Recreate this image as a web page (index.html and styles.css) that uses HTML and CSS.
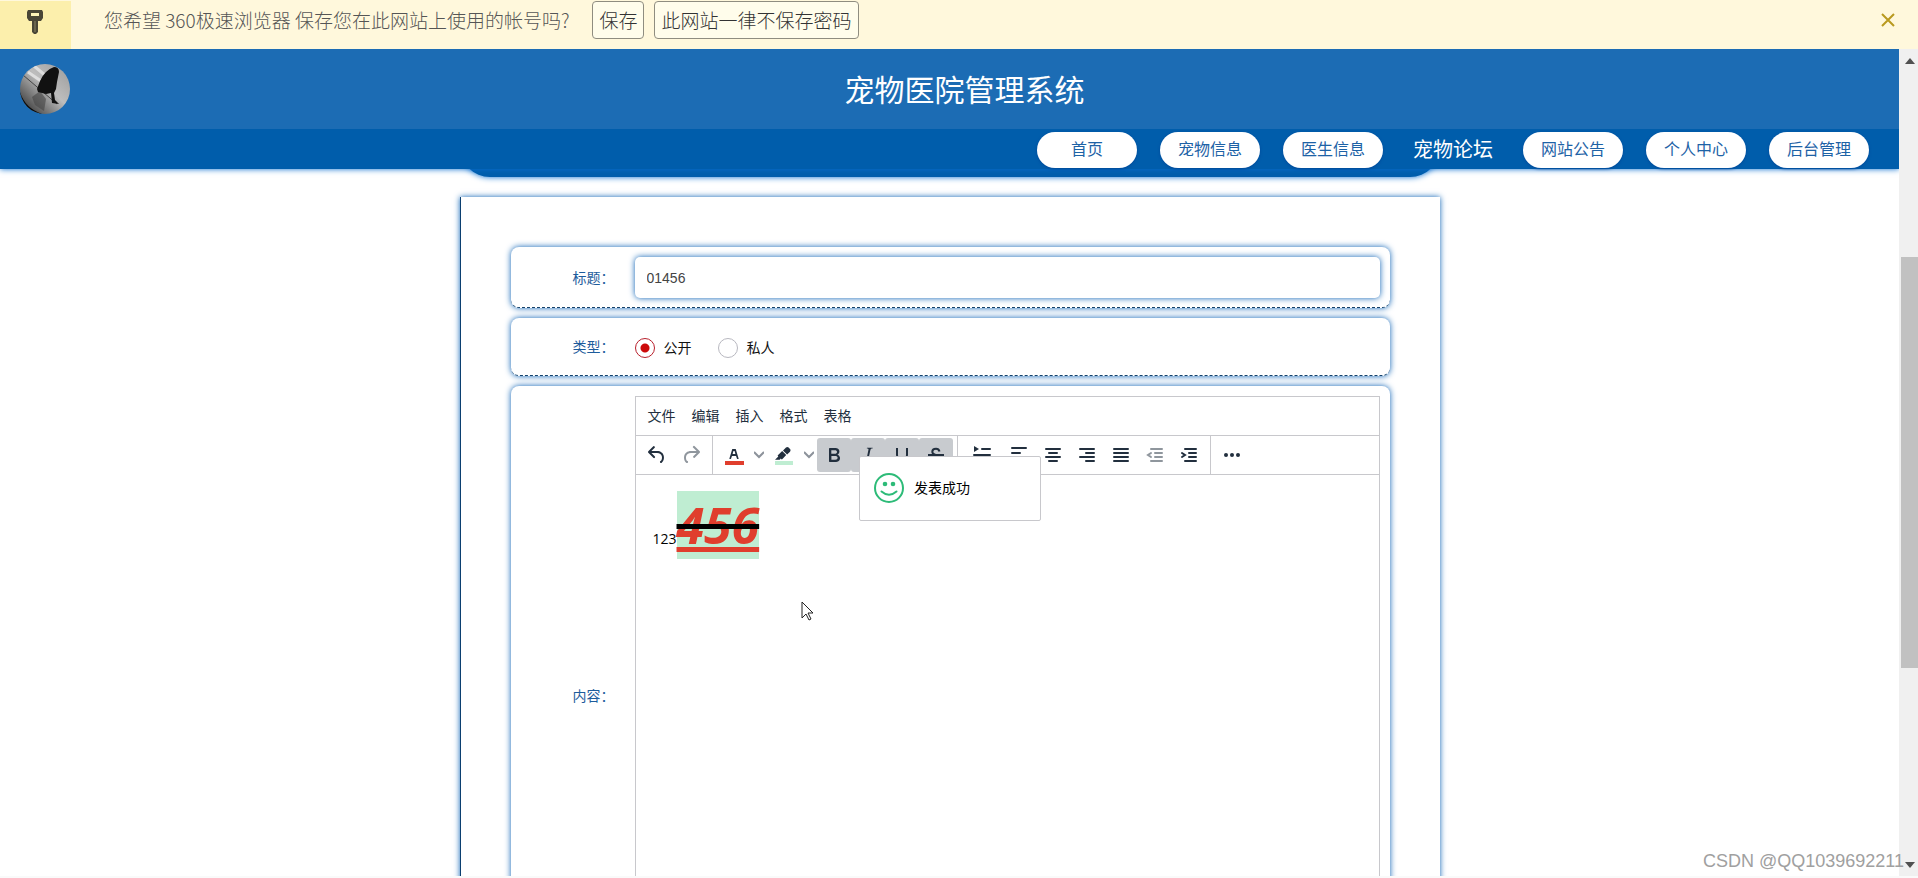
FILE: index.html
```html
<!DOCTYPE html>
<html lang="zh-CN">
<head>
<meta charset="utf-8">
<title>宠物医院管理系统</title>
<link rel="stylesheet" href="styles.css">
</head>
<body>
<div class="infobar">
  <div class="infobar-icon">
    <svg width="18" height="26" viewBox="0 0 18 26" aria-hidden="true">
      <path d="M2 1h14l1 2v6l-2 3h-3v11l-2 2H8l-2-2V12H3L1 9V3z" fill="#4a4636"/>
      <path d="M5 4h8v3H5z" fill="#fdf3b8"/>
      <path d="M9 12v11" stroke="#8a8467" stroke-width="1"/>
    </svg>
  </div>
  <p class="infobar-text">您希望 360极速浏览器 保存您在此网站上使用的帐号吗?</p>
  <button class="infobar-btn" type="button">保存</button>
  <button class="infobar-btn" type="button">此网站一律不保存密码</button>
  <button class="infobar-close" type="button" aria-label="关闭">
    <svg width="14" height="14" viewBox="0 0 14 14"><path d="M1 1l12 12M13 1L1 13" stroke="#b99a1f" stroke-width="2"/></svg>
  </button>
</div>

<div class="viewport">
  <div class="page">
    <header class="site-header">
      <div class="brand">
        <svg class="avatar" viewBox="0 0 50 50" role="img" aria-label="头像">
          <defs>
            <clipPath id="round"><circle cx="25" cy="25" r="25"/></clipPath>
            <linearGradient id="wall" x1="0" y1="1" x2="1" y2="0">
              <stop offset="0" stop-color="#222"/><stop offset=".3" stop-color="#777"/>
              <stop offset=".55" stop-color="#bdbdbd"/><stop offset="1" stop-color="#999"/>
            </linearGradient>
          </defs>
          <g clip-path="url(#round)">
            <path d="M0 0h50v50H0z" fill="url(#wall)"/>
            <path d="M8 8l13 9M14 2l12 10" stroke="#dedede" stroke-width="3"/>
            <path d="M3 11l34 29" stroke="#444" stroke-width="1"/>
            <path d="M0 28q5 16 22 22H0z" fill="#0c0c0c"/>
            <path d="M12 33l8-6 6 8-2 12-9-6z" fill="#444" opacity=".6"/>
            <path d="M34 3q5 0 5 5l-2 10-1 7-2 4 1 7 4 4-7-1-1-10-5 1-8-2-1-3 3-8q5-11 14-14z" fill="#111"/>
          </g>
        </svg>
        <h1 class="title">宠物医院管理系统</h1>
      </div>
      <nav class="nav">
        <a class="nav-item" href="#">首页</a>
        <a class="nav-item" href="#">宠物信息</a>
        <a class="nav-item" href="#">医生信息</a>
        <a class="nav-item nav-item-active" href="#">宠物论坛</a>
        <a class="nav-item" href="#">网站公告</a>
        <a class="nav-item" href="#">个人中心</a>
        <a class="nav-item" href="#">后台管理</a>
      </nav>
    </header>
    <div class="banner-edge"></div>
    <main class="panel">
      <form class="form">
        <div class="row">
          <label class="label" for="subject">标题：</label>
          <input class="text-input" id="subject" type="text" value="01456">
        </div>
        <div class="row row-radio">
          <span class="label" id="kind">类型：</span>
          <div class="radios" role="radiogroup" aria-labelledby="kind">
            <label class="radio"><input type="radio" name="kind" checked>公开</label>
            <label class="radio"><input type="radio" name="kind">私人</label>
          </div>
        </div>
        <div class="row row-editor">
          <span class="label">内容：</span>
          <div class="editor">
            <div class="menubar">
              <button type="button">文件</button>
              <button type="button">编辑</button>
              <button type="button">插入</button>
              <button type="button">格式</button>
              <button type="button">表格</button>
            </div>
            <div class="toolbar">
              <div class="group">
                <button class="tool" type="button" aria-label="撤销"><svg viewBox="0 0 24 24"><path d="M6.4 8H12c3.7 0 6.2 2 6.8 5.1.6 2.7-.4 5.6-2.3 6.8a1 1 0 01-1-1.8c1.1-.6 1.8-2.7 1.4-4.6-.5-2.1-2.1-3.5-4.9-3.5H6.4l3.3 3.3a1 1 0 11-1.4 1.4l-5-5a1 1 0 010-1.4l5-5a1 1 0 011.4 1.4L6.4 8z"/></svg></button>
                <button class="tool tool-off" type="button" aria-label="重做"><svg viewBox="0 0 24 24"><path d="M17.6 10H12c-2.8 0-4.4 1.4-4.9 3.5-.4 2 .3 4 1.4 4.6a1 1 0 11-1 1.8c-2-1.2-2.9-4.1-2.3-6.8.6-3 3-5.1 6.8-5.1h5.6l-3.3-3.3a1 1 0 111.4-1.4l5 5a1 1 0 010 1.4l-5 5a1 1 0 01-1.4-1.4l3.3-3.3z"/></svg></button>
              </div>
              <div class="group">
                <button class="tool" type="button" aria-label="文字颜色"><svg viewBox="0 0 24 24"><path fill="#e03e2d" d="M3 18h19v4H3z"/><path d="M8.7 16h-.8a.5.5 0 01-.5-.6l2.7-9c.1-.3.3-.4.5-.4h2.8c.2 0 .4.1.5.4l2.7 9a.5.5 0 01-.5.6h-.8a.5.5 0 01-.4-.4l-.7-2.2c0-.3-.3-.4-.5-.4h-3.4c-.2 0-.4.1-.5.4l-.7 2.2c0 .3-.2.4-.4.4zm2.6-7.6l-.6 2a.5.5 0 00.5.6h1.6a.5.5 0 00.5-.6l-.6-2c0-.3-.3-.4-.5-.4h-.4c-.2 0-.4.1-.5.4z"/></svg></button>
                <button class="tool-arrow" type="button" aria-label="更多文字颜色"><svg viewBox="0 0 10 10"><path d="M0 2l5 5 5-5"/></svg></button>
                <button class="tool" type="button" aria-label="背景颜色"><svg viewBox="0 0 24 24"><path fill="#bfedd2" d="M3 18h18v4H3z"/><path d="M7.7 16.7H3l3.3-3.3-.7-.8L10.2 8l4 4.1-4 4.2c-.2.2-.6.2-.8 0l-.6-.7-1.1 1.1zm5-7.5L11 7.4l3-2.9a2 2 0 012.6 0L18 6c.7.7.7 2 0 2.7l-2.9 2.9-1.8-1.8-.5-.6"/></svg></button>
                <button class="tool-arrow" type="button" aria-label="更多背景颜色"><svg viewBox="0 0 10 10"><path d="M0 2l5 5 5-5"/></svg></button>
                <button class="tool tool-on" type="button" aria-label="粗体"><svg viewBox="0 0 24 24"><path d="M7.8 19c-.3 0-.5 0-.6-.2l-.2-.5V5.7c0-.2 0-.4.2-.5l.6-.2h5c1.5 0 2.7.3 3.5 1 .7.6 1.1 1.4 1.1 2.5a3 3 0 01-.6 1.9c-.4.6-1 1-1.6 1.2.4.1.9.3 1.3.6s.8.7 1 1.2c.4.4.5 1 .5 1.6 0 1.3-.4 2.3-1.3 3-.8.7-2.1 1-3.8 1H7.8zm5-8.3c.6 0 1.2-.1 1.6-.5.4-.3.6-.7.6-1.3 0-1.1-.8-1.7-2.3-1.7H9.3v3.5h3.4zm.5 6c.7 0 1.3-.1 1.7-.4.4-.4.6-.9.6-1.5s-.2-1-.7-1.4c-.4-.3-1-.4-2-.4H9.4v3.8h4z"/></svg></button>
                <button class="tool tool-on" type="button" aria-label="斜体"><svg viewBox="0 0 24 24"><path d="M16.7 4.7l-.1.9h-.3c-.6 0-1 0-1.4.3-.3.3-.4.6-.5 1.1l-2.1 9.8v.6c0 .5.4.8 1.4.8h.2l-.2.8H8l.2-.8h.2c1.1 0 1.8-.5 2-1.5l2-9.8.1-.5c0-.6-.4-.8-1.4-.8h-.3l.2-.9h5.8z"/></svg></button>
                <button class="tool tool-on" type="button" aria-label="下划线"><svg viewBox="0 0 24 24"><path d="M7 5v7a5 5 0 0010 0V5M6 19h12" fill="none" stroke="#222f3e" stroke-width="2"/></svg></button>
                <button class="tool tool-on" type="button" aria-label="删除线"><svg viewBox="0 0 24 24"><path d="M15.500 8.500C15 6.500 13.500 5.800 12 5.800c-2 0-3.700 1-3.700 3 0 1.500 1 2.400 3 3M15 14.500c1 2.500-.5 4-3 4s-4-1-4-3M4 12h16" fill="none" stroke="#222f3e" stroke-width="2"/></svg></button>
              </div>
              <div class="group">
                <button class="tool tool-wide" type="button" aria-label="首行缩进"><svg viewBox="0 0 24 24"><path d="M4 3l5 3-5 3z"/><path class="bars" d="M12 6h8M4 12h16M4 18h16"/></svg></button>
                <button class="tool" type="button" aria-label="左对齐"><svg viewBox="0 0 24 24"><path class="bars" d="M5 5h14M5 10h8M5 14h14M5 18h8"/></svg></button>
                <button class="tool" type="button" aria-label="居中"><svg viewBox="0 0 24 24"><path class="bars" d="M5 6h14M8 10h8M5 14h14M8 18h8"/></svg></button>
                <button class="tool" type="button" aria-label="右对齐"><svg viewBox="0 0 24 24"><path class="bars" d="M5 6h14M11 10h8M5 14h14M11 18h8"/></svg></button>
                <button class="tool" type="button" aria-label="两端对齐"><svg viewBox="0 0 24 24"><path class="bars" d="M5 6h14M5 10h14M5 14h14M5 18h14"/></svg></button>
                <button class="tool tool-off" type="button" aria-label="减少缩进"><svg viewBox="0 0 24 24"><path class="bars" d="M8 6h11M12 10h7M12 14h7M8 18h11M8 10l-3 2 3 2"/></svg></button>
                <button class="tool" type="button" aria-label="增加缩进"><svg viewBox="0 0 24 24"><path class="bars" d="M8 6h11M12 10h7M12 14h7M8 18h11M5 10l3 2-3 2"/></svg></button>
              </div>
              <div class="group">
                <button class="tool" type="button" aria-label="更多"><svg viewBox="0 0 24 24"><circle cx="6" cy="12" r="2"/><circle cx="12" cy="12" r="2"/><circle cx="18" cy="12" r="2"/></svg></button>
              </div>
            </div>
            <div class="editor-body" contenteditable="true" aria-label="内容"><p>123<span class="struck"><em>456</em></span></p></div>
          </div>
        </div>
      </form>
    </main>
  </div>
  <div class="scrollbar" aria-hidden="true">
    <svg width="10" height="6" viewBox="0 0 10 6"><path d="M0 6l5-6 5 6z" fill="#505050"/></svg>
    <div class="track"><div class="thumb"></div></div>
    <svg width="10" height="6" viewBox="0 0 10 6"><path d="M0 0l5 6 5-6z" fill="#505050"/></svg>
  </div>
</div>

<div class="toast" role="status">
  <svg width="30" height="30" viewBox="0 0 30 30" aria-hidden="true">
    <circle cx="15" cy="15" r="14" fill="none" stroke="#2dbb78" stroke-width="2"/>
    <circle cx="11" cy="11" r="2.300" fill="#2dbb78"/><circle cx="19" cy="11" r="2.300" fill="#2dbb78"/>
    <path d="M7.500 18.500q7.500 6.500 15 0" fill="none" stroke="#2dbb78" stroke-width="2" stroke-linecap="round"/>
  </svg>
  <span>发表成功</span>
</div>
<svg class="cursor" width="13" height="20" viewBox="0 0 13 20" aria-hidden="true"><path d="M1 1v16l4-4 3 6 2-1-3-6h5z" fill="#fff" stroke="#222" stroke-width="1"/></svg>
<div class="watermark">CSDN @QQ1039692211</div>
</body>
</html>
```
FILE: styles.css
```css
* {
  box-sizing: border-box;
}

body {
  margin: 0;
  height: 100vh;
  padding-bottom: 2px;
  display: flex;
  flex-direction: column;
  overflow: hidden;
  background: #fafafa;
  color: #111;
  font: 14px/20px "Liberation Sans", "Noto Sans CJK SC", sans-serif;
}

button {
  padding: 0;
  border: 0;
  background: none;
  font: inherit;
  color: inherit;
}

/* browser prompt */
.infobar {
  flex: none;
  height: 49px;
  padding: 0 23px 9px 0;
  display: flex;
  align-items: center;
  background: #fff8dc;
  font-family: "Noto Sans CJK SC", sans-serif;
  font-size: 19px;
  font-weight: 300;
}

.infobar-icon {
  width: 71px;
  height: 48px;
  margin-bottom: -9px;
  padding: 8px 0 0 26px;
  background: #fcefac;
}

.infobar-text {
  margin: 0 23px 0 33px;
  color: #555;
}

.infobar-btn {
  height: 38px;
  margin-right: 10px;
  padding: 0 6px;
  border: 1px solid #8f8d80;
  border-radius: 4px;
  background: #fffdeb;
  color: #333;
}

.infobar-close {
  margin-left: auto;
  display: flex;
}

/* page */
.viewport {
  flex: 1;
  min-height: 0;
  display: flex;
}

.page {
  flex: 1;
  overflow: hidden;
  background: #fff;
}

.site-header {
  position: relative;
  z-index: 2;
  background: #005dab;
  box-shadow: 0 0 6px #0a6fd0;
}

.brand {
  height: 80px;
  padding: 0 20px;
  display: flex;
  align-items: center;
  background: #1c6cb4;
}

.avatar {
  width: 50px;
  height: 50px;
}

.title {
  flex: 1;
  margin: 0 20px 0 0;
  padding-top: 4px;
  text-align: center;
  font-size: 30px;
  line-height: 40px;
  font-weight: 400;
  color: #fff;
}

.nav {
  height: 40px;
  padding: 3px 30px 0;
  display: flex;
  justify-content: flex-end;
  gap: 23px;
}

.nav-item {
  width: 100px;
  height: 36px;
  border-radius: 18px;
  background: #fff;
  box-shadow: 0 1px 3px #00499a;
  color: #1d62a6;
  font-size: 16px;
  line-height: 36px;
  text-align: center;
  text-decoration: none;
}

.nav-item-active {
  width: auto;
  padding: 0 7px;
  background: none;
  box-shadow: none;
  color: #fff;
  font-size: 20px;
}

.banner-edge {
  max-width: 980px;
  height: 38px;
  margin: -30px auto 0;
  border-radius: 0 0 30px 30px;
  background: #005dab;
  box-shadow: 0 0 6px #0a6fd0;
}

.panel {
  max-width: 980px;
  margin: 20px auto 0;
  padding: 50px;
  border-left: 1px solid #0b3f70;
  box-shadow: 0 0 6px #0a60b4;
}

.form {
  display: flex;
  flex-direction: column;
  gap: 10px;
}

.row {
  display: flex;
  align-items: center;
  padding: 10px 10px 9px;
  border-bottom: 1px dashed #12406a;
  border-radius: 8px;
  box-shadow: 0 0 6px #0a60b4;
}

.label {
  width: 94px;
  margin-right: 20px;
  text-align: right;
  color: #1d5c9c;
}

.text-input {
  flex: 1;
  height: 41px;
  padding: 0 12px;
  border: 0;
  border-radius: 5px;
  box-shadow: 0 0 6px #0a60b4;
  font: inherit;
  color: #444;
}

.row-radio {
  min-height: 58px;
}

.radios {
  display: flex;
  gap: 26px;
  padding-top: 2px;
}

.radio {
  display: flex;
  align-items: center;
  gap: 9px;
}

.radio input {
  appearance: none;
  width: 20px;
  height: 20px;
  margin: 0;
  border: 1px solid #b8b8c0;
  border-radius: 50%;
  background: #fff;
}

.radio input:checked {
  border-color: #b8202c;
  background: radial-gradient(circle, #cc0a0a 4px, #fff 5px);
}

/* editor */
.editor {
  flex: 1;
  height: 600px;
  border: 1px solid #c8c8cc;
  color: #222f3e;
}

.menubar {
  height: 39px;
  padding: 0 12px;
  display: flex;
  gap: 16px;
  border-bottom: 1px solid #c8c8cc;
}

.toolbar {
  height: 39px;
  display: flex;
  border-bottom: 1px solid #c8c8cc;
}

.group {
  padding: 2px 4px;
  display: flex;
  border-right: 1px solid #c8c8cc;
}

.group:last-child {
  border-right: 0;
}

.tool {
  width: 34px;
  height: 34px;
  display: flex;
  align-items: center;
  justify-content: center;
  border-radius: 3px;
}

.tool svg {
  width: 24px;
  height: 24px;
  fill: #222f3e;
}

.tool .bars {
  fill: none;
  stroke: #222f3e;
  stroke-width: 2;
  stroke-linecap: round;
}

.tool-wide {
  width: 40px;
}

.tool-on {
  background: #c8cbcf;
}

.tool-off {
  opacity: .5;
}

.tool-arrow {
  width: 16px;
  height: 34px;
  display: flex;
  align-items: center;
  justify-content: center;
}

.tool-arrow svg {
  width: 10px;
  height: 10px;
  fill: none;
  stroke: #8d939b;
  stroke-width: 2;
}

.editor-body {
  padding: 16px 17px;
  color: #000;
  font-family: "Open Sans", sans-serif;
  line-height: 20px;
  outline: 0;
}

.editor-body p {
  margin: 0;
  line-height: normal;
}

.struck {
  font-size: 50px;
  font-weight: 700;
  text-decoration: line-through;
}

.struck em {
  background: #bfedd2;
  color: #e03e2d;
  text-decoration: underline;
  text-decoration-skip-ink: none;
}

/* scrollbar */
.scrollbar {
  width: 19px;
  padding: 9px 0 8px 2px;
  display: flex;
  flex-direction: column;
  align-items: center;
  background: #f0f0f0;
}

.track {
  flex: 1;
  align-self: stretch;
  padding-top: 193px;
}

.thumb {
  height: 68%;
  background: #c1c1c1;
}

/* overlays */
.toast {
  position: absolute;
  top: 456px;
  left: calc(50% - 100px);
  width: 182px;
  height: 65px;
  padding: 0 14px 2px;
  display: flex;
  align-items: center;
  gap: 10px;
  border: 1px solid #c8c8cc;
  border-radius: 2px;
  background: #fff;
  color: #000;
}

.cursor {
  position: absolute;
  left: 801px;
  top: 601px;
}

.watermark {
  position: absolute;
  right: 14px;
  bottom: 7px;
  color: #a0a0a0;
  font-family: "Liberation Sans", sans-serif;
  font-size: 18px;
}
```
